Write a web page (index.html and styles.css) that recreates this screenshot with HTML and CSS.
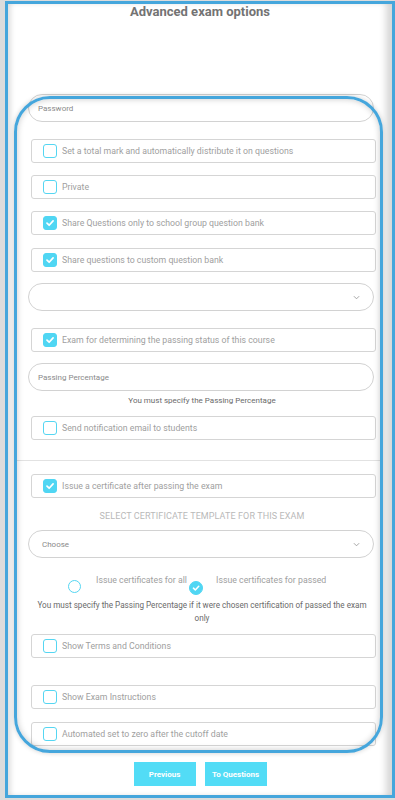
FILE: index.html
```html
<!DOCTYPE html>
<html>
<head>
<meta charset="utf-8">
<link rel="stylesheet" href="styles.css">
</head>
<body>
<div class="page">
  <h1 class="title">Advanced exam options</h1>
  <div class="form">
    <div class="pill pill--first"><span class="ph">Password</span></div>

    <div class="row m17"><span class="cb"></span><span class="lbl">Set a total mark and automatically distribute it on questions</span></div>
    <div class="row m12"><span class="cb"></span><span class="lbl">Private</span></div>
    <div class="row m12"><span class="cb cb--on"><svg viewBox="0 0 14 14"><path d="M3.5 7.2 L6 9.6 L10.6 4.6" fill="none" stroke="#fff" stroke-width="2" stroke-linecap="round" stroke-linejoin="round"/></svg></span><span class="lbl">Share Questions only to school group question bank</span></div>
    <div class="row m13"><span class="cb cb--on"><svg viewBox="0 0 14 14"><path d="M3.5 7.2 L6 9.6 L10.6 4.6" fill="none" stroke="#fff" stroke-width="2" stroke-linecap="round" stroke-linejoin="round"/></svg></span><span class="lbl">Share questions to custom question bank</span></div>

    <div class="pill m11 pill--select"><span class="ph"></span><svg class="chev" viewBox="0 0 8 5"><path d="M1 1 L4 4 L7 1" fill="none" stroke="#999" stroke-width="1"/></svg></div>

    <div class="row m17"><span class="cb cb--on"><svg viewBox="0 0 14 14"><path d="M3.5 7.2 L6 9.6 L10.6 4.6" fill="none" stroke="#fff" stroke-width="2" stroke-linecap="round" stroke-linejoin="round"/></svg></span><span class="lbl">Exam for determining the passing status of this course</span></div>

    <div class="pill m11"><span class="ph">Passing Percentage</span></div>
    <p class="hint">You must specify the Passing Percentage</p>

    <div class="row m9"><span class="cb"></span><span class="lbl">Send notification email to students</span></div>
  </div>

  <hr class="divider">

  <div class="form">
    <div class="row m13"><span class="cb cb--on"><svg viewBox="0 0 14 14"><path d="M3.5 7.2 L6 9.6 L10.6 4.6" fill="none" stroke="#fff" stroke-width="2" stroke-linecap="round" stroke-linejoin="round"/></svg></span><span class="lbl">Issue a certificate after passing the exam</span></div>

    <p class="section">SELECT CERTIFICATE TEMPLATE FOR THIS EXAM</p>

    <div class="pill pill--select pill--choose"><span class="ph">Choose</span><svg class="chev" viewBox="0 0 8 5"><path d="M1 1 L4 4 L7 1" fill="none" stroke="#999" stroke-width="1"/></svg></div>

    <div class="radios">
      <span class="radio"></span>
      <span class="rlbl">Issue certificates for all</span>
      <span class="radio radio--on"><svg viewBox="0 0 14 14"><path d="M4 7.2 L6.2 9.3 L10.2 5" fill="none" stroke="#fff" stroke-width="1.8" stroke-linecap="round" stroke-linejoin="round"/></svg></span>
      <span class="rlbl">Issue certificates for passed</span>
    </div>
    <p class="hint hint--long">You must specify the Passing Percentage if it were chosen certification of passed the exam only</p>

    <div class="row m9"><span class="cb"></span><span class="lbl">Show Terms and Conditions</span></div>
    <div class="row m27"><span class="cb"></span><span class="lbl">Show Exam Instructions</span></div>
    <div class="row m13"><span class="cb"></span><span class="lbl">Automated set to zero after the cutoff date</span></div>
  </div>

  <div class="actions">
    <button class="btn">Previous</button>
    <button class="btn">To Questions</button>
  </div>

  <div class="mark"></div>
</div>
</body>
</html>
```

FILE: styles.css
```css
* { box-sizing: border-box; }

html, body {
  margin: 0;
  padding: 0;
}

body {
  background: #dcdcdc;
  font-family: Roboto, "Liberation Sans", sans-serif;
  height: 800px;
  overflow: hidden;
}

.page {
  position: relative;
  margin: 1px 0 0 5px;
  width: 390px;
  height: 797px;
  border: 3px solid #45a6dc;
  background: #fff;
  box-shadow: inset 5px 0 5px -2px rgba(0,0,0,0.12), inset -9px 0 7px -3px rgba(0,0,0,0.16);
}

.title {
  margin: 0;
  text-align: center;
  font-size: 13px;
  line-height: 16px;
  font-weight: 700;
  color: #737373;
}

.form {
  padding: 0 16px 0 20px;
}

.pill {
  height: 28px;
  border: 1px solid #d2d2d2;
  border-radius: 14px;
  display: flex;
  align-items: center;
  padding-left: 9px;
  margin-right: 2px;
}

.pill--first { margin-top: 74px; }

.pill--select {
  justify-content: space-between;
  padding-right: 13px;
}

.pill--choose {
  margin-top: 8px;
  padding-left: 13px;
}

.ph {
  font-size: 8px;
  color: #8a8a8a;
}

.chev {
  width: 7px;
  height: 5px;
}

.row {
  height: 24px;
  margin-left: 3px;
  border: 1px solid #d5d5d5;
  border-radius: 3px;
  display: flex;
  align-items: center;
  padding-left: 11px;
  gap: 5px;
}

.m9 { margin-top: 9px; }
.m11 { margin-top: 11px; }
.m12 { margin-top: 12px; }
.m13 { margin-top: 13px; }
.m17 { margin-top: 17px; }
.m27 { margin-top: 27px; }

.cb {
  width: 14px;
  height: 14px;
  flex: none;
  border: 1.5px solid #55d6f2;
  border-radius: 3px;
  background: #fff;
  display: flex;
}

.cb--on {
  background: #50d6f3;
  border-color: #50d6f3;
}

.cb svg {
  width: 100%;
  height: 100%;
}

.lbl {
  font-size: 8.75px;
  color: #a0a0a0;
  white-space: nowrap;
}

.hint {
  margin: 4px 0 0;
  text-align: center;
  font-size: 8px;
  line-height: 12px;
  color: #6a6a6a;
}

.hint--long {
  margin-top: 4px;
  font-size: 8.15px;
  line-height: 13px;
  padding: 0 2px;
}

.divider {
  margin: 20px 11px 0 9px;
  border: 0;
  border-top: 1px solid #e2e2e2;
}

.section {
  margin: 12px 0 0;
  text-align: center;
  font-size: 9px;
  line-height: 12px;
  color: #b9b9b9;
  letter-spacing: 0.1px;
}

.radios {
  margin-top: 16px;
  display: flex;
  align-items: flex-start;
  padding-left: 40px;
  height: 21px;
}

.radio {
  width: 13px;
  height: 13px;
  flex: none;
  margin-top: 6px;
  border: 1.5px solid #55d6f2;
  border-radius: 50%;
  display: flex;
}

.radio--on {
  width: 14px;
  height: 14px;
  margin-top: 7px;
  margin-left: 2px;
  background: #50d6f3;
  border-color: #50d6f3;
}

.radio svg {
  width: 100%;
  height: 100%;
}

.rlbl {
  font-size: 8.75px;
  line-height: 12px;
  color: #a0a0a0;
  margin-left: 15px;
  white-space: nowrap;
}

.radio--on + .rlbl { margin-left: 13px; }

.actions {
  display: flex;
  justify-content: center;
  gap: 9px;
  margin-top: 16px;
}

.btn {
  width: 62px;
  height: 24px;
  border: 0;
  background: #52dcf6;
  color: #fff;
  font-family: Roboto, "Liberation Sans", sans-serif;
  font-size: 8px;
  font-weight: 700;
  padding: 0;
}

/* annotation outline drawn over the form */
.mark {
  position: absolute;
  left: 6px;
  top: 92px;
  width: 369px;
  height: 657px;
  border: 3px solid #45a6dc;
  border-radius: 36px;
  box-shadow: inset 0 0 6px rgba(0,0,0,0.22), 0 0 5px rgba(0,0,0,0.2);
  pointer-events: none;
}
```
